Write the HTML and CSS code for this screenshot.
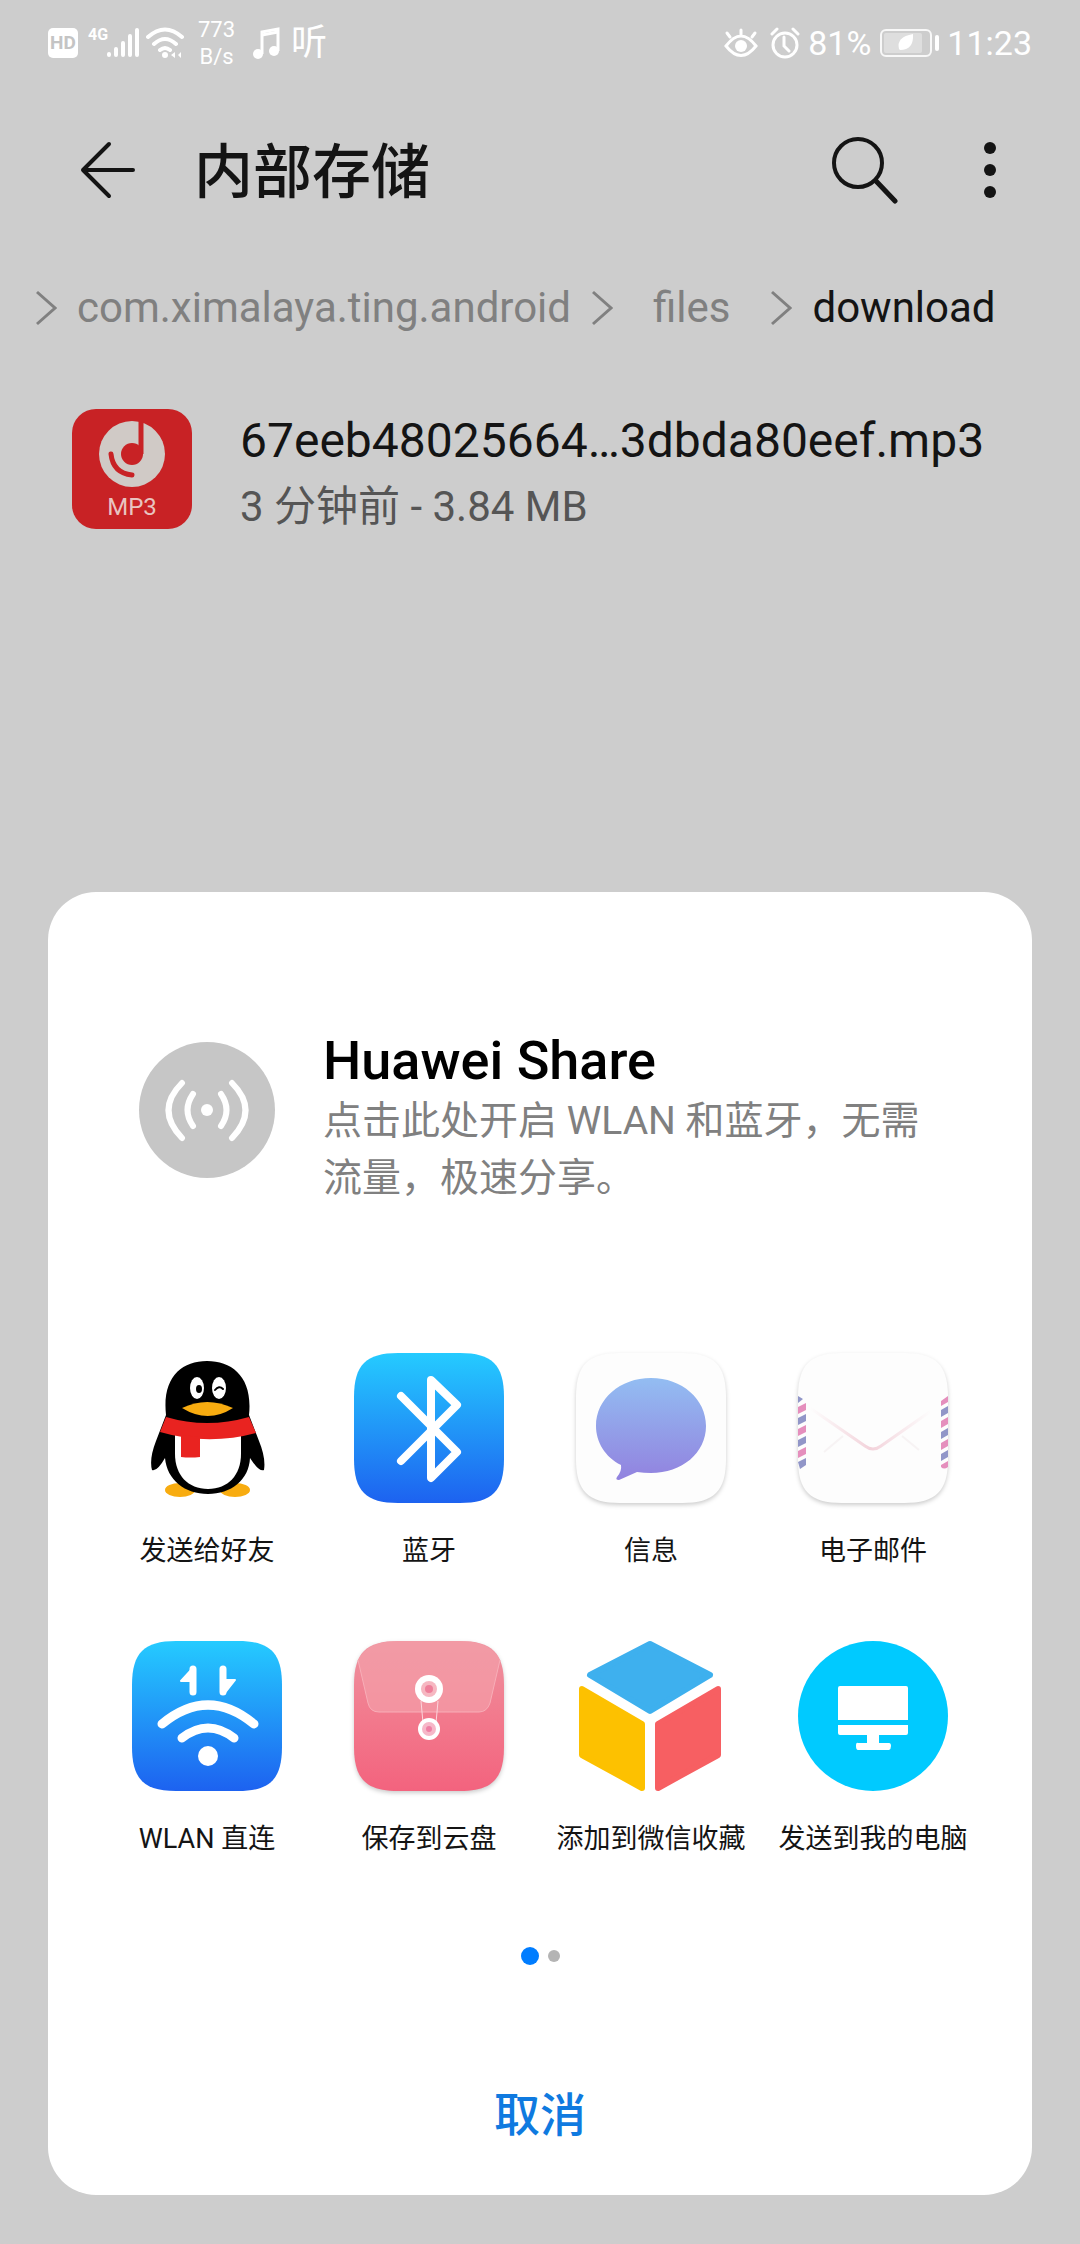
FILE: index.html
```
<!DOCTYPE html>
<html lang="zh-CN">
<head>
<meta charset="utf-8">
<meta name="viewport" content="width=device-width, initial-scale=1">
<title>内部存储</title>
<link rel="stylesheet" href="styles.css">
</head>
<body>
<div class="status">
  <div class="status-side">
    <span class="hd">HD</span>
    <span class="signal">
      <span class="net">4G</span>
      <svg width="34" height="32" viewBox="0 0 34 32" stroke="#fff" stroke-width="4" stroke-linecap="round"><path d="M3 27v1M10 22v6M17 16v12M24 9v19M31 3v25"/></svg>
    </span>
    <svg class="wifi" width="38" height="32" viewBox="0 0 38 32" fill="none" stroke="#fff" stroke-width="4" stroke-linecap="round"><path d="M2 10Q19-5 36 10M8 17Q19 7 30 17M14 23Q19 19 24 23"/><circle cx="19" cy="28" r="3" fill="#fff" stroke="none"/><path d="M25 28l4-3v6zM35 25l-3 3 3 3" fill="#fff" stroke="none"/></svg>
    <span class="speed">773<br>B/s</span>
    <svg class="music" width="28" height="32" viewBox="0 0 28 32" fill="none" stroke="#fff" stroke-width="3"><path d="M9 27V5L25 2V24"/><path d="M9 8L25 5"/><circle cx="5" cy="27" r="5" fill="#fff" stroke="none"/><circle cx="21" cy="24" r="5" fill="#fff" stroke="none"/></svg>
    <span class="ting">听</span>
  </div>
  <div class="status-side">
    <svg class="eye" width="34" height="30" viewBox="0 0 34 30" fill="none" stroke="#fff" stroke-width="3" stroke-linecap="round"><path d="M2 18Q17-2 32 18Q17 37 2 18zM17 7V2M6 9L3 5M28 9l3-4"/><circle cx="17" cy="18" r="6" fill="#fff" stroke="none"/></svg>
    <svg class="alarm" width="30" height="32" viewBox="0 0 30 32" fill="none" stroke="#fff" stroke-width="3" stroke-linecap="round"><circle cx="15" cy="18" r="12"/><path d="M14 10v9l5 5M2 7l5-5M28 7l-5-5"/></svg>
    <span class="percent">81%</span>
    <svg class="battery" width="60" height="30" viewBox="0 0 60 30"><rect x="2" y="2" width="50" height="26" rx="5" fill="none" stroke="#f8f8f8" stroke-width="2"/><rect x="5" y="5" width="38" height="20" rx="2" fill="#dedede"/><path d="M20 21Q17 9 34 6Q35 22 21 22z" fill="#fff"/><rect x="56" y="7" width="4" height="16" rx="2" fill="#fff"/></svg>
    <span class="clock">11:23</span>
  </div>
</div>

<header class="header">
  <button class="icon-button" aria-label="返回"><svg width="56" height="58" viewBox="0 0 56 58" fill="none" stroke="#141414" stroke-width="4" stroke-linecap="round" stroke-linejoin="round"><path d="M29 3L3 29l26 26M3 29h50"/></svg></button>
  <h1 class="title">内部存储</h1>
  <button class="icon-button" aria-label="搜索"><svg width="66" height="68" viewBox="0 0 66 68" fill="none" stroke="#141414" stroke-width="4" stroke-linecap="round"><circle cx="26" cy="27" r="24"/><path d="M44 45l19 20" stroke-width="5"/></svg></button>
  <button class="icon-button more" aria-label="更多"><svg width="12" height="58" viewBox="0 0 12 58" fill="#141414"><circle cx="6" cy="7" r="6"/><circle cx="6" cy="29" r="6"/><circle cx="6" cy="51" r="6"/></svg></button>
</header>

<nav class="crumbs">
  <svg class="chevron" viewBox="0 0 22 36"><path d="M2 2l18 16L2 34"/></svg>
  <a class="crumb" href="#">com.ximalaya.ting.android</a>
  <svg class="chevron" viewBox="0 0 22 36"><path d="M2 2l18 16L2 34"/></svg>
  <a class="crumb files" href="#">files</a>
  <svg class="chevron" viewBox="0 0 22 36"><path d="M2 2l18 16L2 34"/></svg>
  <a class="crumb current" href="#">download</a>
</nav>

<main class="file">
  <div class="file-icon">
    <svg width="66" height="66" viewBox="0 0 66 66"><circle cx="33" cy="33" r="33" fill="#d0cac6"/><path d="M42 0V33" stroke="#c82225" stroke-width="5"/><circle cx="33" cy="33" r="11" fill="#c82225"/><path d="M12 33Q14 52 33 54" fill="none" stroke="#c82225" stroke-width="5" stroke-linecap="round"/></svg>
    <span>MP3</span>
  </div>
  <div class="file-text">
    <div class="file-name">67eeb48025664…3dbda80eef.mp3</div>
    <div class="file-meta">3 分钟前 - 3.84 MB</div>
  </div>
</main>

<section class="sheet">
  <div class="share">
    <svg class="share-icon" width="136" height="136" viewBox="0 0 136 136"><circle cx="68" cy="68" r="68" fill="#c6c6c6"/><circle cx="68" cy="68" r="6" fill="#fff"/><g fill="none" stroke="#fff" stroke-width="6" stroke-linecap="round"><path d="M54 52Q43 68 54 84M82 52Q93 68 82 84M43 41Q16 68 43 96M93 41Q120 68 93 96"/></g></svg>
    <div>
      <h2 class="share-title">Huawei Share</h2>
      <p class="share-text">点击此处开启 WLAN 和蓝牙，无需流量，极速分享。</p>
    </div>
  </div>

  <div class="apps">
    <button class="app">
      <svg viewBox="0 0 150 150"><ellipse cx="48" cy="137" rx="15" ry="7" fill="#f8ac10"/><ellipse cx="103" cy="137" rx="15" ry="7" fill="#f8ac10"/><path d="M34 62C30 25 49 8 75 8s46 17 42 54l10 26q7 17 5 29-5 2-14-12C117 127 99 141 76 141S35 127 33 105Q25 119 20 117 17 106 24 88z"/><path d="M43 80H109V101C109 122 96 136 76 136S43 122 43 101z" fill="#fff"/><path d="M34 64Q75 76 117 64l7 16Q76 93 28 79z" fill="#e92320"/><path d="M49 82l19 2v20q-10 1-19 0z" fill="#e92320"/><path d="M50 55Q75 43 101 55 76 71 50 55z" fill="#f8ac10"/><ellipse cx="65" cy="35" rx="7" ry="11" fill="#fff"/><ellipse cx="87" cy="35" rx="7" ry="11" fill="#fff"/><ellipse cx="67" cy="36" rx="3" ry="4"/><path d="M83 37q4-5 8-1" fill="none" stroke="#000" stroke-width="2" stroke-linecap="round"/></svg>
      <span>发送给好友</span>
    </button>
    <button class="app">
      <svg viewBox="0 0 150 150"><defs><linearGradient id="blue" x1="0" y1="0" x2="0" y2="1"><stop offset="0" stop-color="#25cbff"/><stop offset="1" stop-color="#1d62f0"/></linearGradient></defs><path d="M0 44C0 12 12 0 44 0h62c32 0 44 12 44 44v62c0 32-12 44-44 44H44C12 150 0 138 0 106z" fill="url(#blue)"/><path d="M47 43l56 56-26 26V27l26 25-56 56" fill="none" stroke="#fff" stroke-width="8" stroke-linecap="round" stroke-linejoin="round"/></svg>
      <span>蓝牙</span>
    </button>
    <button class="app">
      <svg class="raised" viewBox="0 0 150 150"><defs><linearGradient id="violet" x1="0" y1="0" x2="0" y2="1"><stop offset="0" stop-color="#93bdf2"/><stop offset="1" stop-color="#9282df"/></linearGradient></defs><path d="M0 44C0 12 12 0 44 0h62c32 0 44 12 44 44v62c0 32-12 44-44 44H44C12 150 0 138 0 106z" fill="#fdfdfd"/><path d="M75 25c31 0 55 21 55 48s-24 47-55 47q-7 0-14-1l-18 8q-4 0-2-3 5-6 4-12C29 104 20 89 20 73c0-27 24-48 55-48z" fill="url(#violet)"/></svg>
      <span>信息</span>
    </button>
    <button class="app">
      <svg class="raised" viewBox="0 0 150 150"><defs><linearGradient id="fold" x1="0" y1="0" x2="1" y2="0"><stop offset="0" stop-color="#fdfdfd"/><stop offset=".5" stop-color="#f3d3db"/><stop offset="1" stop-color="#fdfdfd"/></linearGradient></defs><path d="M0 44C0 12 12 0 44 0h62c32 0 44 12 44 44v62c0 32-12 44-44 44H44C12 150 0 138 0 106z" fill="#fdfdfd"/><path d="M12 55l55 38q8 6 16 0l50-35" fill="none" stroke="url(#fold)" stroke-width="3"/><path d="M45 83L26 99M104 83l17 14" stroke="#f7f3f4" stroke-width="2"/><g fill="#e58fbd"><path d="M0 54l8-4v7l-8 4zM0 76l8-4v7l-8 4zM0 98l8-4v7l-8 4zM143 48l7-5v6l-7 4zM143 68l7-4v7l-7 4zM143 90l7-4v7l-7 4zM143 112l7-4v6q-4 3-7 0z"/></g><g fill="#9196c8"><path d="M0 43l5 3-5 4zM0 65l8-4v7l-8 4zM0 87l8-4v7l-8 4zM0 109l8-4v7l-6 4zM143 57l7-4v7l-7 4zM143 79l7-4v7l-7 4zM143 101l7-4v7l-7 4z"/></g></svg>
      <span>电子邮件</span>
    </button>
    <button class="app">
      <svg viewBox="0 0 150 150"><path d="M0 44C0 12 12 0 44 0h62c32 0 44 12 44 44v62c0 32-12 44-44 44H44C12 150 0 138 0 106z" fill="url(#blue)"/><g fill="none" stroke="#fff" stroke-width="9" stroke-linecap="round"><path d="M30 83Q76 45 122 83M50 97Q76 77 102 97"/></g><circle cx="76" cy="115" r="10" fill="#fff"/><g fill="#fff" stroke="#fff" stroke-linejoin="round" stroke-linecap="round"><path d="M61 28v23M91 28v23" stroke-width="7"/><path d="M49 40l12-13v13zM103 39L92 53V39z" stroke-width="2"/></g></svg>
      <span>WLAN 直连</span>
    </button>
    <button class="app">
      <svg class="raised" viewBox="0 0 150 150"><defs><linearGradient id="pink" x1="0" y1="0" x2="0" y2="1"><stop offset="0" stop-color="#ee929f"/><stop offset=".5" stop-color="#f27a8d"/><stop offset="1" stop-color="#f3637e"/></linearGradient></defs><path d="M0 44C0 12 12 0 44 0h62c32 0 44 12 44 44v62c0 32-12 44-44 44H44C12 150 0 138 0 106z" fill="url(#pink)"/><path d="M4 19l10 43q2 9 11 9h100q8 0 11-9l10-43Q137 0 106 0H44Q13 0 4 19z" fill="#f49ea8" fill-opacity=".7"/><path d="M4 19l10 43q2 9 11 9h100q8 0 11-9l10-43" fill="none" stroke="#f8aeb8"/><path d="M67 60l2 22M84 60l-2 22" stroke="#fbd5dc"/><circle cx="75" cy="48" r="14" fill="#fff"/><circle cx="75" cy="48" r="8" fill="#f6b7c1"/><circle cx="75" cy="48" r="4" fill="#ee7f9a"/><circle cx="75" cy="88" r="11" fill="#fff"/><circle cx="75" cy="88" r="7" fill="#f6b7c8"/><circle cx="75" cy="88" r="3" fill="#ee7fa4"/></svg>
      <span>保存到云盘</span>
    </button>
    <button class="app">
      <svg viewBox="0 0 150 150" stroke-width="6" stroke-linejoin="round"><path d="M74 3l60 31-60 36-60-36z" fill="#3eb0ee" stroke="#3eb0ee"/><path d="M6 48l60 35v64L6 114z" fill="#fdc100" stroke="#fdc100"/><path d="M142 48L82 83v64l60-33z" fill="#f75f62" stroke="#f75f62"/></svg>
      <span>添加到微信收藏</span>
    </button>
    <button class="app">
      <svg viewBox="0 0 150 150"><circle cx="75" cy="75" r="75" fill="#00caff"/><path d="M42 45h66q2 0 2 2v32H40V47q0-2 2-2zM40 84h70v8q0 2-2 2H81v8h10q2 0 2 3t-2 4H60q-2 0-2-4t2-3h9v-8H42q-2 0-2-2z" fill="#fff"/></svg>
      <span>发送到我的电脑</span>
    </button>
  </div>

  <div class="pager"><span class="dot active"></span><span class="dot"></span></div>
  <button class="cancel">取消</button>
</section>
</body>
</html>
```
FILE: styles.css
```
* {
  box-sizing: border-box;
}

body {
  margin: 0;
  min-height: 100vh;
  display: flex;
  flex-direction: column;
  background: #cdcdcd;
  color: #141414;
  font-family: Roboto, "Noto Sans CJK SC", sans-serif;
}

button {
  padding: 0;
  border: 0;
  background: none;
  color: inherit;
  font: inherit;
  cursor: pointer;
}

svg {
  display: block;
  flex: none;
}

/* Status bar */
.status {
  display: flex;
  justify-content: space-between;
  align-items: center;
  height: 86px;
  padding: 0 48px;
  color: #fff;
}

.status-side {
  display: flex;
  align-items: center;
}

.hd {
  width: 30px;
  border-radius: 5px;
  background: #fff;
  color: #c4c4c4;
  font-size: 19px;
  font-weight: 700;
  line-height: 30px;
  text-align: center;
}

.signal {
  display: flex;
  align-items: flex-start;
  margin-left: 10px;
}

.net {
  width: 18px;
  font-size: 16px;
  font-weight: 700;
  line-height: 16px;
}

.wifi {
  margin-left: 6px;
}

.speed {
  margin-left: 14px;
  font-size: 22px;
  line-height: 27px;
  text-align: center;
}

.music {
  margin-left: 18px;
}

.ting {
  margin-left: 10px;
  font-size: 36px;
  line-height: 40px;
}

.alarm {
  margin-left: 12px;
}

.percent,
.clock {
  margin-left: 8px;
  font-size: 34px;
  line-height: 40px;
}

.battery {
  margin-left: 8px;
}

/* Title bar */
.header {
  display: flex;
  align-items: center;
  height: 168px;
  padding: 0 84px 0 80px;
}

.title {
  flex: 1;
  margin: 0 0 0 58px;
  padding-top: 6px;
  font-size: 59px;
  font-weight: 500;
  line-height: 80px;
}

.more {
  margin-left: 86px;
}

/* Path */
.crumbs {
  display: flex;
  align-items: center;
  height: 108px;
  padding: 0 35px;
}

.chevron {
  width: 22px;
  height: 36px;
  margin: 0 20px;
  fill: none;
  stroke: #808080;
  stroke-width: 3;
}

.chevron:first-child {
  margin-left: 0;
}

.crumb {
  color: #808080;
  font-size: 42px;
  line-height: 48px;
  text-decoration: none;
}

.files {
  margin: 0 20px;
}

.current {
  color: #141414;
}

/* File row */
.file {
  display: flex;
  align-items: flex-start;
  gap: 48px;
  margin: 47px 72px;
}

.file-icon {
  display: flex;
  flex-direction: column;
  align-items: center;
  width: 120px;
  height: 120px;
  padding-top: 12px;
  border-radius: 24px;
  background: #c82225;
  color: #e8c4c0;
  font-size: 24px;
  line-height: 40px;
}

.file-name {
  font-size: 48px;
  line-height: 64px;
}

.file-meta {
  color: #555;
  font-size: 42px;
  line-height: 68px;
}

/* Share sheet */
.sheet {
  margin: auto 48px 49px;
  padding: 128px 48px 40px;
  border-radius: 48px;
  background: #fff;
}

.share {
  display: flex;
  gap: 48px;
  padding: 0 43px;
}

.share-icon {
  margin-top: 22px;
}

.share-title {
  margin: 8px 0 0;
  color: #000;
  font-size: 54px;
  font-weight: 500;
  line-height: 65px;
}

.share-text {
  margin: 0;
  color: #808080;
  font-size: 39px;
  line-height: 57px;
}

.apps {
  display: grid;
  grid-template-columns: repeat(4, 1fr);
  row-gap: 70px;
  margin-top: 146px;
}

.app {
  display: flex;
  flex-direction: column;
  align-items: center;
  gap: 28px;
  font-size: 27px;
  line-height: 40px;
  white-space: nowrap;
}

.app svg {
  width: 150px;
  height: 150px;
  overflow: visible;
}

.raised {
  filter: drop-shadow(0 2px 2px rgba(0, 0, 0, 0.2));
}

.pager {
  display: flex;
  justify-content: center;
  align-items: center;
  gap: 9px;
  height: 18px;
  margin-top: 88px;
}

.dot {
  width: 12px;
  height: 12px;
  border-radius: 50%;
  background: #b4b4b4;
}

.active {
  width: 18px;
  height: 18px;
  background: #007dff;
}

.cancel {
  display: block;
  width: 100%;
  margin-top: 110px;
  color: #0f7ae0;
  font-size: 46px;
  font-weight: 500;
  line-height: 80px;
}
```
